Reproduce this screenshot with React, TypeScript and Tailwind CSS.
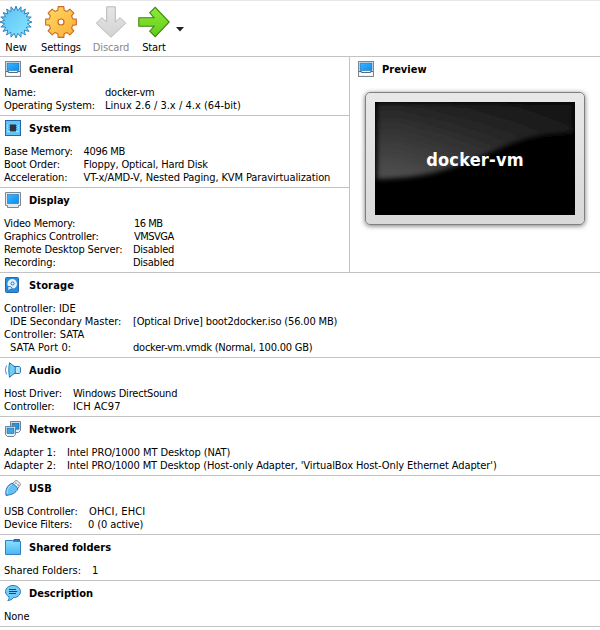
import type { ReactNode } from 'react';

type Row = { label: string; value?: string; indent?: boolean; lt?: string; vt?: string };

function MonitorIcon({ base = true }: { base?: boolean }) {
  return (
    <svg width="16" height="16" viewBox="0 0 16 16">
      <defs>
        <linearGradient id="scr" x1="0" y1="0" x2="1" y2="1">
          <stop offset="0" stopColor="#3fb4fb" />
          <stop offset="1" stopColor="#0a8df0" />
        </linearGradient>
      </defs>
      {base ? (
        <>
          <rect x=".5" y=".5" width="15" height="15" fill="#e9eef2" stroke="#7b8791" />
          <rect x="2" y="2" width="12" height="7.5" fill="url(#scr)" stroke="#1767ad" strokeWidth=".5" />
          <path d="M1 10.5H3.5V11.5H12.5V10.5H15" fill="none" stroke="#4c5a68" strokeWidth=".9" />
          <path d="M1.5 13.2H14.5" stroke="#fff" strokeWidth="2" />
        </>
      ) : (
        <>
          <path d="M.5 .5H15.5V13.5H13.5V15.5H2.5V13.5H.5Z" fill="#e4e9ed" stroke="#7b8791" />
          <rect x="2.4" y="2.4" width="11.2" height="9.2" fill="url(#scr)" stroke="#1767ad" strokeWidth=".5" />
        </>
      )}
    </svg>
  );
}

function ChipIcon() {
  return (
    <svg width="16" height="16" viewBox="0 0 16 16">
      <rect x=".5" y=".5" width="15" height="15" fill="#63c4f8" stroke="#2467ae" />
      <path d="M2 5.5H14M2 7.5H14M2 9.5H14M2 11.5H14" stroke="#d2f1ff" strokeWidth=".8" />
      <rect x="5" y="4.5" width="6" height="7" fill="#2a3540" />
      <path d="M3.5 5.5H5M3.5 7.5H5M3.5 9.5H5M11 5.5H12.5M11 7.5H12.5M11 9.5H12.5" stroke="#40688c" strokeWidth=".8" />
    </svg>
  );
}

function DiskIcon() {
  return (
    <svg width="16" height="16" viewBox="0 0 16 16">
      <rect x=".5" y=".5" width="13" height="15" rx="1" fill="#2b8edc" stroke="#2368ad" />
      <circle cx="7.2" cy="6.9" r="4.8" fill="#e0f2fc" />
      <circle cx="7.6" cy="6.5" r="1.5" fill="#fff" stroke="#1e70b6" />
      <path d="M2.6 9.5L3 13.8L7.5 11.4L5.5 9.6Z" fill="#c6e6fa" stroke="#1a5d9f" strokeWidth=".7" />
    </svg>
  );
}

function AudioIcon() {
  return (
    <svg width="16" height="16" viewBox="0 0 16 16" fill="none">
      <path d="M9 4.5H14.5L15.4 5.5V10.5L14.5 11.5H9Z" fill="#b7e6fb" stroke="#2a6fae" />
      <path d="M4.5 .7C6.5 2.3 8.5 4 10.2 5V11C8.5 12 6.5 13.7 4.5 15.3C3.6 10 3.6 6 4.5 .7Z" fill="#72cbf7" stroke="#2270b4" />
      <path d="M1.8 3.5C.3 6 .3 10 1.8 12.5" stroke="#58a6d8" strokeWidth="1.1" />
    </svg>
  );
}

function NetworkIcon() {
  return (
    <svg width="16" height="16" viewBox="0 0 16 16">
      <path d="M5.5 .5H15.5V9.5L13.5 11.5H7.5L5.5 9.5Z" fill="#edf2f5" stroke="#6f8496" />
      <rect x="7" y="2.2" width="7" height="6" fill="#2595df" stroke="#1866a5" strokeWidth=".7" />
      <path d="M.5 5.5H10.5V13.5L8.8 15.5H2.2L.5 13.5Z" fill="#edf2f5" stroke="#6f8496" />
      <rect x="2.1" y="7.1" width="6.8" height="5.2" fill="#35a7eb" stroke="#1866a5" strokeWidth=".7" />
    </svg>
  );
}

function UsbIcon() {
  return (
    <svg width="16" height="16" viewBox="0 0 16 16">
      <path d="M7.2 3.6L10.8 .5C12.6 .5 15.2 3 15.5 4.5L12.6 8.8Z" fill="#f1f4f6" stroke="#76828d" strokeWidth=".9" />
      <path d="M10.3 2.6L11.5 3.7M12.6 4.5L13.6 5.5" stroke="#65717e" strokeWidth="1.1" />
      <path d="M6.8 3.3C8.7 3.7 12 6.8 12.8 9.1C10.8 12.8 7.3 14.8 1 15.4C.2 9.3 2.3 5.6 6.8 3.3Z" fill="#66c1f3" stroke="#286baa" />
      <path d="M2.2 13.6C1.9 9.6 3.6 6.5 6.7 4.8" fill="none" stroke="#aee3fc" />
    </svg>
  );
}

function FolderIcon() {
  return (
    <svg width="16" height="16" viewBox="0 0 16 16">
      <defs>
        <linearGradient id="fold" x1="0" y1="0" x2="0" y2="1">
          <stop offset="0" stopColor="#8be0ff" />
          <stop offset="1" stopColor="#49b6f2" />
        </linearGradient>
      </defs>
      <path d="M7.5 2.5L9 .5H14.5V3Z" fill="#317fc0" stroke="#215f9e" />
      <path d="M.5 1.5H7.5L8.5 2.5H15.5V15.5H.5Z" fill="url(#fold)" stroke="#3380be" />
    </svg>
  );
}

function SpeechIcon() {
  return (
    <svg width="16" height="16" viewBox="0 0 16 16">
      <path d="M8 .5C12.2 .5 15.5 3.2 15.5 6.6C15.5 10.1 12 12.7 8 12.7C7.2 14.5 5.2 15.4 2.8 15.5C4 14.2 4.3 13 4 11.8C1.8 10.7 .5 8.8 .5 6.6C.5 3.2 3.8 .5 8 .5Z" fill="#71cdf7" stroke="#2878b9" />
      <path d="M4 4.5H11M4 6.5H12.2M4 8.5H11" stroke="#19426f" strokeWidth="1" />
    </svg>
  );
}

function Header({ icon, title, track }: { icon: ReactNode; title: string; track?: string }) {
  return (
    <div className="flex h-[29px] gap-2 pt-1 pl-[5px]">
      {icon}
      <h2 className={`h-4 text-[11px] leading-[17px] font-bold whitespace-nowrap ${track ?? ''}`}>{title}</h2>
    </div>
  );
}

function Section({ icon, title, track, cols = 'w-0', rows }: { icon: ReactNode; title: string; track?: string; cols?: string; rows: Row[] }) {
  return (
    <section className="border-t border-[#c3c3c3] pb-[3px]">
      <Header icon={icon} title={title} track={track} />
      {rows.map((r) => (
        <div key={r.label} className="flex h-[13px] pl-1 leading-[13px] tracking-[-0.11px] whitespace-nowrap">
          <span className={`shrink-0 ${r.indent ? 'pl-1.5' : ''} ${cols} ${r.lt ?? ''}`}>{r.label}</span>
          {r.value && <span className={r.vt ?? ''}>{r.value}</span>}
        </div>
      ))}
    </section>
  );
}

function NewIcon() {
  const points = Array.from({ length: 40 }, (_, i) => {
    const r = i % 2 ? 11.5 : 16;
    const a = (i * Math.PI) / 20;
    return `${(16 + r * Math.sin(a)).toFixed(2)},${(16 - r * Math.cos(a)).toFixed(2)}`;
  }).join(' ');
  return (
    <svg width="32" height="32" viewBox="0 0 32 32">
      <defs>
        <linearGradient id="burst" x1="0" y1="0" x2="1" y2="1">
          <stop offset="0" stopColor="#59bdf5" />
          <stop offset="1" stopColor="#8beaff" />
        </linearGradient>
      </defs>
      <polygon points={points} fill="url(#burst)" stroke="#2878b4" strokeWidth=".9" />
    </svg>
  );
}

function GearIcon() {
  const points = Array.from({ length: 8 }, (_, i) =>
    [[-15, 12.2], [-10.5, 15.6], [10.5, 15.6], [15, 12.2]].map(([deg, r]) => {
      const a = ((i * 45 + deg) * Math.PI) / 180;
      return `${(17 + r * Math.sin(a)).toFixed(2)},${(17 - r * Math.cos(a)).toFixed(2)}`;
    }).join(' '),
  ).join(' ');
  return (
    <svg width="34" height="34" viewBox="0 0 34 34">
      <defs>
        <linearGradient id="gear" x1="0" y1="0" x2="1" y2="1">
          <stop offset="0" stopColor="#ffdb62" />
          <stop offset="1" stopColor="#fbac38" />
        </linearGradient>
      </defs>
      <polygon points={points} fill="url(#gear)" stroke="#c96a24" strokeWidth="1.1" strokeLinejoin="round" />
      <circle cx="17" cy="17" r="3" fill="#fff" stroke="#c9651c" strokeWidth="1.2" />
    </svg>
  );
}

function ArrowIcon({ down }: { down?: boolean }) {
  return (
    <svg width="32" height="32" viewBox="0 0 32 32">
      <defs>
        <linearGradient id="go" x1="0" y1="0" x2="0" y2="1">
          <stop offset="0" stopColor="#8cec38" />
          <stop offset="1" stopColor="#62cc18" />
        </linearGradient>
        <linearGradient id="off" x1="0" y1="0" x2="0" y2="1">
          <stop offset="0" stopColor="#e6e6e6" />
          <stop offset="1" stopColor="#d3d3d3" />
        </linearGradient>
      </defs>
      {down ? (
        <path d="M11.7 .8H20.3V16L25.2 11.7L30.7 17.2L16 31.2L1.3 17.2L6.8 11.7L11.7 16Z" fill="url(#off)" stroke="#b8b8b8" />
      ) : (
        <path d="M.8 11.7H16L11.7 6.8L17.2 1.3L31.2 16L17.2 30.7L11.7 25.2L16 20.3H.8Z" fill="url(#go)" stroke="#438315" strokeWidth="1.1" />
      )}
    </svg>
  );
}

function Tool({ icon, label, className }: { icon: ReactNode; label: string; className: string }) {
  return (
    <button className={`flex shrink-0 flex-col items-center ${className}`}>
      <span className="flex h-[34px] items-center">{icon}</span>
      <span className="mt-0.5 text-[11px] leading-[14px] tracking-[-0.1px] whitespace-nowrap">{label}</span>
    </button>
  );
}

function Preview() {
  return (
    <section className="grow border-t border-l border-[#c3c3c3]">
      <div className="pl-[3px]">
        <Header icon={<MonitorIcon />} title="Preview" />
      </div>
      <div className="mt-[6px] ml-[15px] h-[133px] w-[220px] rounded-[5px] border border-[#808080] bg-gradient-to-b from-[#e8e8e8] to-[#d9d9d9] px-[9px] pt-[9px] shadow-[0_1px_5px_#777]">
        <div className="grid h-[113px] w-[200px] place-items-center overflow-hidden bg-black">
          <svg className="col-start-1 row-start-1" width="200" height="113" viewBox="0 0 200 113">
            <defs>
              <linearGradient id="gloss" x1="0" y1="0" x2="0" y2="1">
                <stop offset="0" stopColor="#242424" />
                <stop offset="1" stopColor="#505050" />
              </linearGradient>
              <linearGradient id="fade" x1="0" y1="0" x2="1" y2="0">
                <stop offset=".1" stopColor="#000" stopOpacity="0" />
                <stop offset="1" stopColor="#000" stopOpacity=".5" />
              </linearGradient>
              <filter id="soft" x="-10%" y="-10%" width="120%" height="120%">
                <feGaussianBlur stdDeviation="2.4" />
              </filter>
            </defs>
            <g filter="url(#soft)">
              <path d="M2 1H198V31C150 31 130 45 100 57C70 69 50 76 2 77Z" fill="url(#gloss)" />
              <path d="M2 1H198V31C150 31 130 45 100 57C70 69 50 76 2 77Z" fill="url(#fade)" />
            </g>
          </svg>
          <span className="z-10 col-start-1 row-start-1 pt-0.5 text-[18px] leading-none font-bold tracking-[0.2px] text-white">docker-vm</span>
        </div>
      </div>
    </section>
  );
}

export default function App() {
  return (
    <main className="h-[630px] w-[600px] overflow-hidden bg-white font-['DejaVu_Sans_Condensed','DejaVu_Sans',sans-serif] text-[11px] text-black [font-stretch:condensed]">
      <nav className="flex h-14 border-t border-[#e8e8e8] pt-1">
        <Tool icon={<NewIcon />} label="New" className="w-8" />
        <Tool icon={<GearIcon />} label="Settings" className="ml-2 w-[42px]" />
        <Tool icon={<ArrowIcon down />} label="Discard" className="ml-2 w-[42px] text-[#888]" />
        <Tool icon={<ArrowIcon />} label="Start" className="ml-1.5 w-8" />
        <svg className="mt-[22px] ml-1.5" width="8" height="5" viewBox="0 0 8 5"><path d="M0 0H8L4 4.5Z" fill="#222" /></svg>
      </nav>
      <div className="flex h-[216px]">
        <div className="w-[349px] shrink-0">
          <Section icon={<MonitorIcon />} title="General" track="tracking-[0.1px]" cols="w-[101px]" rows={[
            { label: 'Name:', value: 'docker-vm', vt: 'tracking-[-0.2px]' },
            { label: 'Operating System:', value: 'Linux 2.6 / 3.x / 4.x (64-bit)', vt: 'tracking-[0.02px]' },
          ]} />
          <Section icon={<ChipIcon />} title="System" track="tracking-[0.15px]" cols="w-[79.5px]" rows={[
            { label: 'Base Memory:', value: '4096 MB', vt: 'tracking-[-0.3px]' },
            { label: 'Boot Order:', value: 'Floppy, Optical, Hard Disk', vt: 'tracking-[-0.16px]' },
            { label: 'Acceleration:', value: 'VT-x/AMD-V, Nested Paging, KVM Paravirtualization' },
          ]} />
          <Section icon={<MonitorIcon base={false} />} title="Display" cols="w-[129px]" rows={[
            { label: 'Video Memory:', value: '16 MB', lt: 'tracking-[-0.2px]', vt: 'pl-px tracking-[-0.5px]' },
            { label: 'Graphics Controller:', value: 'VMSVGA', lt: 'tracking-[-0.2px]', vt: 'pl-px tracking-[-0.5px]' },
            { label: 'Remote Desktop Server:', value: 'Disabled' },
            { label: 'Recording:', value: 'Disabled' },
          ].map((r) => (r.value === 'Disabled' ? { ...r, vt: 'tracking-[-0.25px]' } : r))} />
        </div>
        <Preview />
      </div>
      <Section icon={<DiskIcon />} title="Storage" track="tracking-[0.15px]" cols="w-[129px]" rows={[
        { label: 'Controller: IDE', lt: 'tracking-[0px]' },
        { label: 'IDE Secondary Master:', value: '[Optical Drive] boot2docker.iso (56.00 MB)', indent: true, lt: 'tracking-[-0.05px]', vt: 'tracking-[-0.16px]' },
        { label: 'Controller: SATA', lt: 'tracking-[0.06px]' },
        { label: 'SATA Port 0:', value: 'docker-vm.vmdk (Normal, 100.00 GB)', indent: true, lt: 'tracking-[0.12px]', vt: 'tracking-[-0.23px]' },
      ]} />
      <Section icon={<AudioIcon />} title="Audio" cols="w-[69px]" rows={[
        { label: 'Host Driver:', value: 'Windows DirectSound', vt: 'tracking-[-0.2px]' },
        { label: 'Controller:', value: 'ICH AC97', vt: 'tracking-[0.15px]' },
      ]} />
      <Section icon={<NetworkIcon />} title="Network" cols="w-[63px]" rows={[
        { label: 'Adapter 1:', value: 'Intel PRO/1000 MT Desktop (NAT)', lt: 'tracking-[0px]', vt: 'tracking-[-0.09px]' },
        { label: 'Adapter 2:', value: "Intel PRO/1000 MT Desktop (Host-only Adapter, 'VirtualBox Host-Only Ethernet Adapter')", lt: 'tracking-[0px]' },
      ]} />
      <Section icon={<UsbIcon />} title="USB" cols="w-[84px]" rows={[
        { label: 'USB Controller:', value: 'OHCI, EHCI', vt: 'pl-px tracking-[0.15px]' },
        { label: 'Device Filters:', value: '0 (0 active)' },
      ]} />
      <Section icon={<FolderIcon />} title="Shared folders" cols="w-[88px]" rows={[{ label: 'Shared Folders:', value: '1', lt: 'tracking-[0px]' }]} />
      <Section icon={<SpeechIcon />} title="Description" rows={[{ label: 'None' }]} />
      <div className="border-t border-[#c3c3c3]" />
    </main>
  );
}
